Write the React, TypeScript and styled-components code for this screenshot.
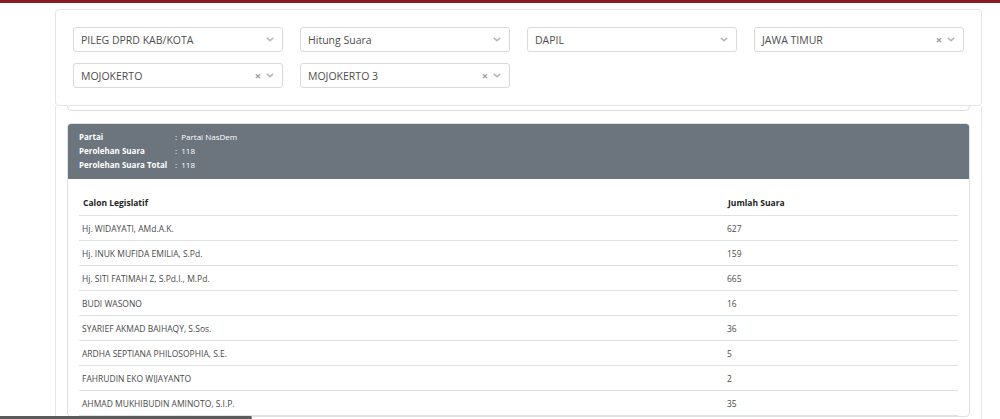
import React from 'react';
import styled, { createGlobalStyle } from 'styled-components';

const GlobalStyle = createGlobalStyle`
  html, body {
    margin: 0;
    padding: 0;
    background: #fff;
    font-family: "Open Sans", "Liberation Sans", sans-serif;
    overflow: hidden;
  }
`;

const TopBar = styled.div`
  height: 3px;
  background: #8b1d22;
`;

const Page = styled.div`
  padding: 6px 18px 0 55px;
`;

const FilterCard = styled.div`
  position: relative;
  z-index: 1;
  background: #fff;
  border: 1px solid #e6e6e6;
  border-radius: 4px;
  padding: 17px;
  display: grid;
  grid-template-columns: repeat(4, 210px);
  column-gap: 17px;
  row-gap: 11px;
`;

const Select = styled.div`
  height: 25px;
  box-sizing: border-box;
  border: 1px solid #d9d9d9;
  border-radius: 3px;
  display: flex;
  align-items: center;
  padding: 0 7px;
  font-size: 10.5px;
  color: #4d4d4d;
`;

const SelectText = styled.span`
  flex: 1;
  white-space: nowrap;
`;

const Clear = styled.span`
  color: #999;
  font-size: 11px;
  font-weight: 700;
  margin-right: 4px;
  line-height: 1;
`;

const Chevron = () => (
  <svg width="10" height="7" viewBox="0 0 10 7">
    <path d="M1.8 1.8 L5 4.6 L8.2 1.8" fill="none" stroke="#b8b8b8" strokeWidth="1.6" />
  </svg>
);

const Panel = styled.div`
  border-left: 1px solid #e8e8e8;
  border-right: 1px solid #e8e8e8;
  padding: 0 11px;
  min-height: 330px;
`;

const Stub = styled.div`
  height: 4px;
  border: 1px solid #dcdcdc;
  border-top: none;
  border-radius: 0 0 6px 6px;
  margin-bottom: 12px;
`;

const ResultCard = styled.div`
  border: 1px solid #dee2e6;
  border-radius: 4px;
  overflow: hidden;
`;

const CardHeader = styled.div`
  background: #6c757d;
  color: #fff;
  padding: 6px 11px 7px;
  display: grid;
  grid-template-columns: 96px 1fr;
  font-size: 8px;
  line-height: 14px;
`;

const Label = styled.span`
  font-weight: 700;
`;

const CardBody = styled.div`
  padding: 11px 11px 0 11px;
`;

const Table = styled.table`
  width: 100%;
  border-collapse: collapse;
  font-size: 8.5px;
  color: #4a4a4a;
`;

const Th = styled.th<{ $w?: number }>`
  text-align: left;
  font-weight: 700;
  color: #222;
  height: 25px;
  padding: 0 4px;
  border-bottom: 1px solid #dee2e6;
  width: ${p => (p.$w ? `${p.$w}px` : 'auto')};
`;

const Td = styled.td`
  height: 24px;
  padding: 0 3px;
  border-bottom: 1px solid #dee2e6;
`;

const ScrollThumb = styled.div`
  position: fixed;
  left: 0;
  bottom: 0;
  width: 252px;
  height: 3px;
  background: #5b5b5b;
  border-radius: 0 2px 2px 0;
`;

const filters = [
  { text: 'PILEG DPRD KAB/KOTA', clear: false },
  { text: 'Hitung Suara', clear: false },
  { text: 'DAPIL', clear: false },
  { text: 'JAWA TIMUR', clear: true },
  { text: 'MOJOKERTO', clear: true },
  { text: 'MOJOKERTO 3', clear: true },
];

const rows: [string, string][] = [
  ['Hj. WIDAYATI, AMd.A.K.', '627'],
  ['Hj. INUK MUFIDA EMILIA, S.Pd.', '159'],
  ['Hj. SITI FATIMAH Z, S.Pd.I., M.Pd.', '665'],
  ['BUDI WASONO', '16'],
  ['SYARIEF AKMAD BAIHAQY, S.Sos.', '36'],
  ['ARDHA SEPTIANA PHILOSOPHIA, S.E.', '5'],
  ['FAHRUDIN EKO WIJAYANTO', '2'],
  ['AHMAD MUKHIBUDIN AMINOTO, S.I.P.', '35'],
];

export default function App() {
  return (
    <>
      <GlobalStyle />
      <TopBar />
      <Page>
        <FilterCard>
          {filters.map(f => (
            <Select key={f.text}>
              <SelectText>{f.text}</SelectText>
              {f.clear && <Clear>×</Clear>}
              <Chevron />
            </Select>
          ))}
        </FilterCard>
        <Panel>
          <Stub />
          <ResultCard>
            <CardHeader>
              <Label>Partai</Label>
              <span>:&nbsp; Partai NasDem</span>
              <Label>Perolehan Suara</Label>
              <span>:&nbsp; 118</span>
              <Label>Perolehan Suara Total</Label>
              <span>:&nbsp; 118</span>
            </CardHeader>
            <CardBody>
              <Table>
                <thead>
                  <tr>
                    <Th $w={637}>Calon Legislatif</Th>
                    <Th>Jumlah Suara</Th>
                  </tr>
                </thead>
                <tbody>
                  {rows.map(([name, votes]) => (
                    <tr key={name}>
                      <Td>{name}</Td>
                      <Td>{votes}</Td>
                    </tr>
                  ))}
                </tbody>
              </Table>
            </CardBody>
          </ResultCard>
        </Panel>
      </Page>
      <ScrollThumb />
    </>
  );
}
